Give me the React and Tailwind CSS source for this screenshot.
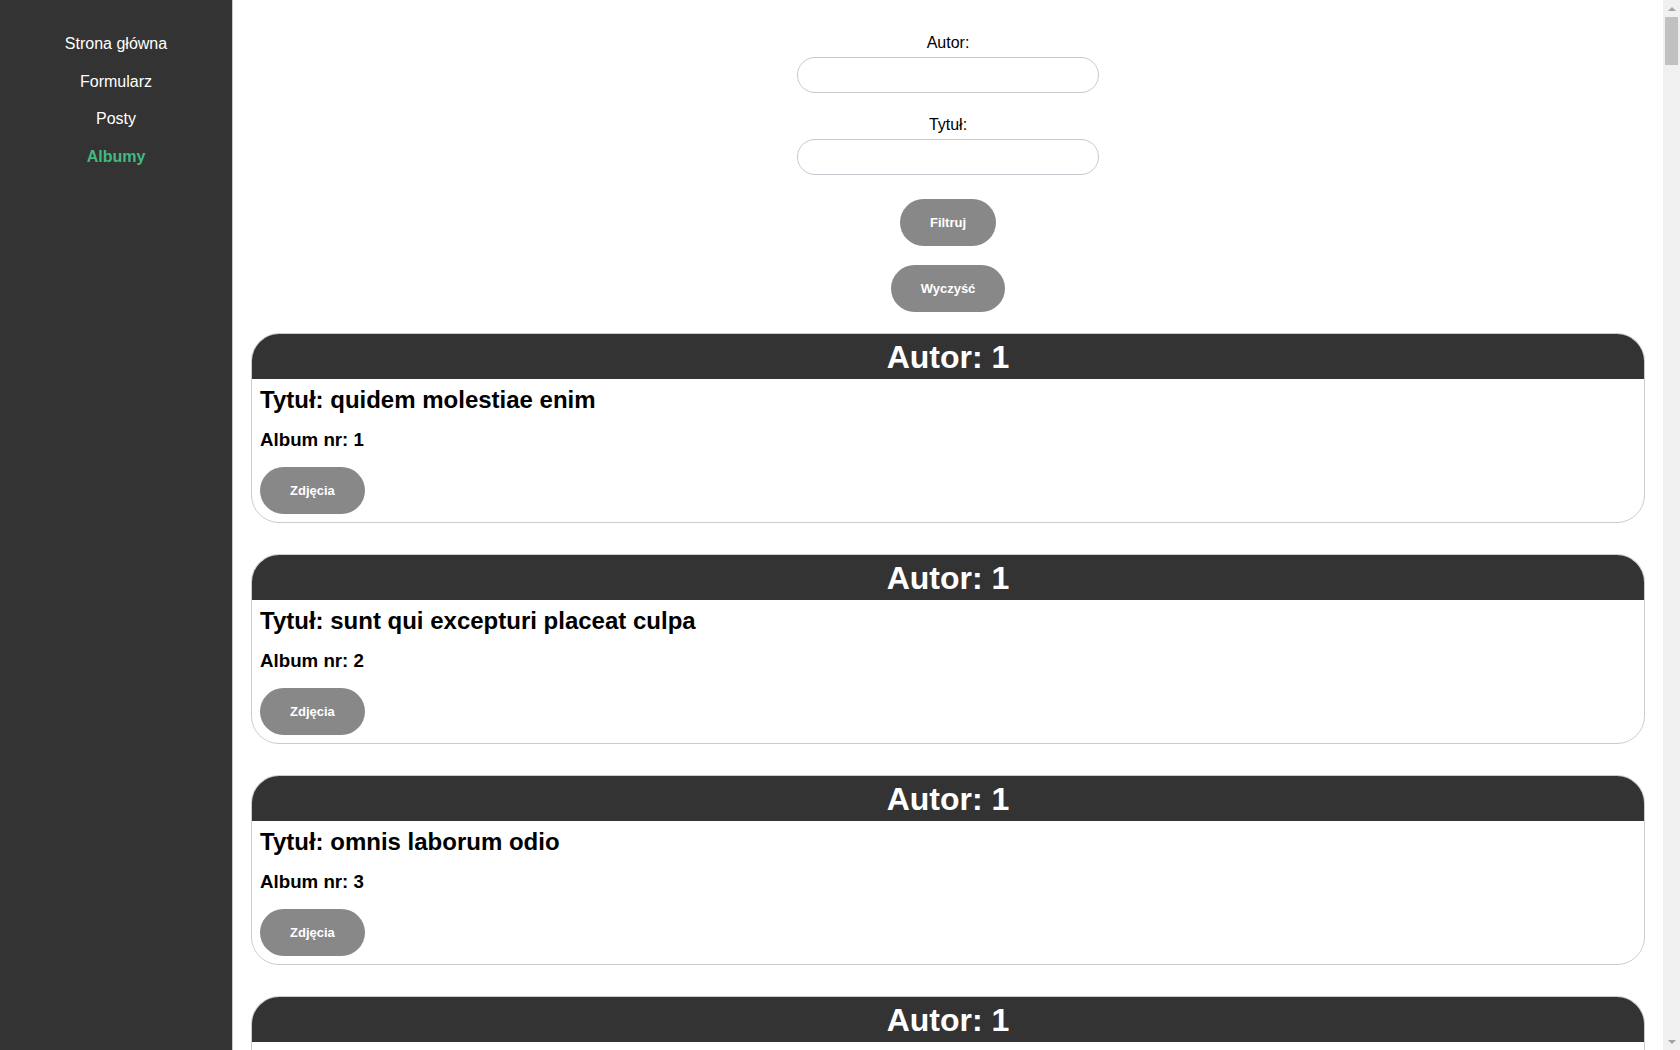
import React, { useState } from 'react';

const NAV = [
  { label: 'Strona główna', active: false },
  { label: 'Formularz', active: false },
  { label: 'Posty', active: false },
  { label: 'Albumy', active: true },
];

const ALBUMS = [
  { userId: 1, id: 1, title: 'quidem molestiae enim' },
  { userId: 1, id: 2, title: 'sunt qui excepturi placeat culpa' },
  { userId: 1, id: 3, title: 'omnis laborum odio' },
  { userId: 1, id: 4, title: 'non esse culpa molestiae omnis sed optio' },
  { userId: 1, id: 5, title: 'eaque aut omnis a' },
  { userId: 1, id: 6, title: 'natus impedit quibusdam illo est' },
  { userId: 1, id: 7, title: 'quibusdam autem aliquid et et quia' },
  { userId: 1, id: 8, title: 'qui fuga est a eum' },
  { userId: 1, id: 9, title: 'saepe unde necessitatibus rem' },
  { userId: 1, id: 10, title: 'distinctio laborum qui' },
];

const GrayButton = ({ children }) => (
  <button className="h-[47px] px-[30px] rounded-full bg-[#888888] text-white text-[13px] font-bold leading-[15px]">
    {children}
  </button>
);

const AlbumCard = ({ album }) => (
  <div className="border border-[#cccccc] rounded-[28px] overflow-hidden bg-white">
    {/* Header */}
    <div className="h-[45px] bg-[#333333] flex items-center justify-center">
      <h2 className="text-[32px] font-bold text-white leading-[36px]">Autor: {album.userId}</h2>
    </div>
    <div className="px-2 pt-[7px] pb-[8px] flex flex-col items-start">
      <h3 className="text-[24px] font-bold leading-[28px] text-black">Tytuł: {album.title}</h3>
      <p className="mt-[15px] text-[18.72px] font-bold leading-[22px] text-black">Album nr: {album.id}</p>
      <div className="mt-[16px]">
        <GrayButton>Zdjęcia</GrayButton>
      </div>
    </div>
  </div>
);

// imitation of the browser's classic scrollbar seen at the right edge
const FakeScrollbar = () => (
  <div className="w-[17px] shrink-0 h-screen bg-[#f0f0f0] flex flex-col items-center">
    <div className="h-[17px] flex items-center justify-center">
      <div className="w-0 h-0 border-l-[4px] border-r-[4px] border-b-[4px] border-l-transparent border-r-transparent border-b-[#a3a3a3]" />
    </div>
    <div className="w-[13px] h-[48px] bg-[#c1c1c1]" />
    <div className="flex-1" />
    <div className="h-[17px] flex items-center justify-center">
      <div className="w-0 h-0 border-l-[4px] border-r-[4px] border-t-[4px] border-l-transparent border-r-transparent border-t-[#a3a3a3]" />
    </div>
  </div>
);

export default function App() {
  const [author, setAuthor] = useState('');
  const [title, setTitle] = useState('');

  return (
    <div className="flex h-screen overflow-hidden bg-white" style={{ fontFamily: '"Liberation Sans", Arial, sans-serif' }}>
      {/* Sidebar */}
      <aside className="w-[233px] shrink-0 bg-[#333333] border-r border-[#c8c8d0]">
        <nav className="flex flex-col items-center pt-[35px] gap-[19.5px]">
          {NAV.map((item) => (
            <a
              key={item.label}
              href="#"
              className={`text-[16px] leading-[18px] ${item.active ? 'font-bold text-[#42b983]' : 'text-white'}`}
            >
              {item.label}
            </a>
          ))}
        </nav>
      </aside>

      {/* Main */}
      <main className="flex-1 min-w-0 overflow-y-auto [scrollbar-width:none]">
        <form className="flex flex-col items-center pt-[34px]" onSubmit={(e) => e.preventDefault()}>
          <label className="text-[16px] leading-[18px] text-black">Autor:</label>
          <input
            value={author}
            onChange={(e) => setAuthor(e.target.value)}
            className="mt-[5px] w-[302px] h-[36px] rounded-full border border-[#c8c8d0] px-4 outline-none"
          />
          <label className="mt-[23px] text-[16px] leading-[18px] text-black">Tytuł:</label>
          <input
            value={title}
            onChange={(e) => setTitle(e.target.value)}
            className="mt-[5px] w-[302px] h-[36px] rounded-full border border-[#c8c8d0] px-4 outline-none"
          />
          <div className="mt-[24px]">
            <GrayButton>Filtruj</GrayButton>
          </div>
          <div className="mt-[19px]">
            <GrayButton>Wyczyść</GrayButton>
          </div>
        </form>

        <div className="flex flex-col gap-[31px] px-[18px] mt-[21px] pb-6">
          {ALBUMS.map((a) => (
            <AlbumCard key={a.id} album={a} />
          ))}
        </div>
      </main>

      <FakeScrollbar />
    </div>
  );
}
